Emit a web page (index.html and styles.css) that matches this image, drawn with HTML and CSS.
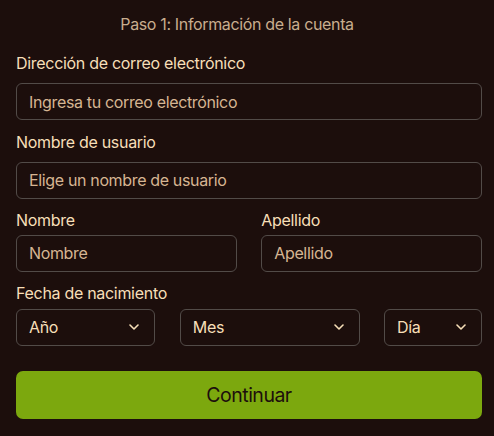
FILE: index.html
```html
<!DOCTYPE html>
<html lang="es">
<head>
<meta charset="utf-8">
<title>Paso 1</title>
<link rel="stylesheet" href="styles.css">
</head>
<body>
<form class="form">
  <h1 class="title">Paso 1: Información de la cuenta</h1>
  <div class="field field-email">
    <label class="label" for="email">Dirección de correo electrónico</label>
    <input class="input" id="email" type="email" placeholder="Ingresa tu correo electrónico">
  </div>
  <div class="field field-user">
    <label class="label" for="user">Nombre de usuario</label>
    <input class="input" id="user" type="text" placeholder="Elige un nombre de usuario">
  </div>
  <div class="row row-names">
    <div class="field field-tight">
      <label class="label" for="first">Nombre</label>
      <input class="input" id="first" type="text" placeholder="Nombre">
    </div>
    <div class="field field-tight">
      <label class="label" for="last">Apellido</label>
      <input class="input" id="last" type="text" placeholder="Apellido">
    </div>
  </div>
  <div class="field field-date">
    <span class="label">Fecha de nacimiento</span>
    <div class="row row-date">
      <div class="select"><span>Año</span><svg class="chev" viewBox="0 0 10 6" width="10" height="6"><path d="M1 1l4 4 4-4" fill="none" stroke="currentColor" stroke-width="1.6" stroke-linecap="round" stroke-linejoin="round"/></svg></div>
      <div class="select"><span>Mes</span><svg class="chev" viewBox="0 0 10 6" width="10" height="6"><path d="M1 1l4 4 4-4" fill="none" stroke="currentColor" stroke-width="1.6" stroke-linecap="round" stroke-linejoin="round"/></svg></div>
      <div class="select"><span>Día</span><svg class="chev" viewBox="0 0 10 6" width="10" height="6"><path d="M1 1l4 4 4-4" fill="none" stroke="currentColor" stroke-width="1.6" stroke-linecap="round" stroke-linejoin="round"/></svg></div>
    </div>
  </div>
  <button class="btn" type="button">Continuar</button>
</form>
</body>
</html>
```
FILE: styles.css
```css
* { box-sizing: border-box; }
html, body { margin: 0; background: #1c0e0c; }
body {
  font-family: Inter, "Noto Sans", "Liberation Sans", sans-serif;
  color: #f3dcb4;
  padding: 11.5px 12px 0 16px;
  letter-spacing: -0.35px;
}
.form { display: flex; flex-direction: column; }
.title {
  margin: 0 0 15.3px;
  padding-right: 24px;
  font-size: 16px;
  font-weight: 400;
  line-height: 24px;
  text-align: center;
  color: #c9ad8e;
}
.field { display: flex; flex-direction: column; }
.label {
  font-size: 16px;
  font-weight: 400;
  line-height: 24px;
  color: #f7dfb8;
  letter-spacing: -0.3px;
}
.field-email { margin-bottom: 9.5px; }
.field-email .label { margin-bottom: 8.5px; }
.field-user { margin-bottom: 9px; }
.field-user .label { margin-bottom: 8px; }
.field-tight .label { margin-bottom: 3.2px; }
.row-names { margin-bottom: 8.8px; }
.field-date { margin-bottom: 24.7px; }
.field-date .label { margin-bottom: 4.2px; }
.input, .select {
  height: 37px;
  border: 1px solid #524b48;
  border-radius: 6px;
  background: #1c0e0c;
  padding: 0 12px;
  font-family: inherit;
  font-size: 16px;
  letter-spacing: -0.35px;
  color: #f7dfb8;
  width: 100%;
  outline: none;
}
.input::placeholder { color: #d6b592; opacity: 1; }
.row { display: grid; column-gap: 24.5px; }
.row-names { grid-template-columns: 1fr 1fr; }
.row-date { grid-template-columns: 139.3fr 179.7fr 98fr; }
.select {
  display: flex;
  align-items: center;
  justify-content: space-between;
  padding-right: 15px;
}
.chev { color: #f7dfb8; display: block; }
.btn {
  height: 48px;
  border: none;
  border-radius: 7px;
  background: #7ca80e;
  color: #1c0e0c;
  font-family: inherit;
  font-size: 19.5px;
  letter-spacing: -0.5px;
  font-weight: 400;
  width: 100%;
}
```
